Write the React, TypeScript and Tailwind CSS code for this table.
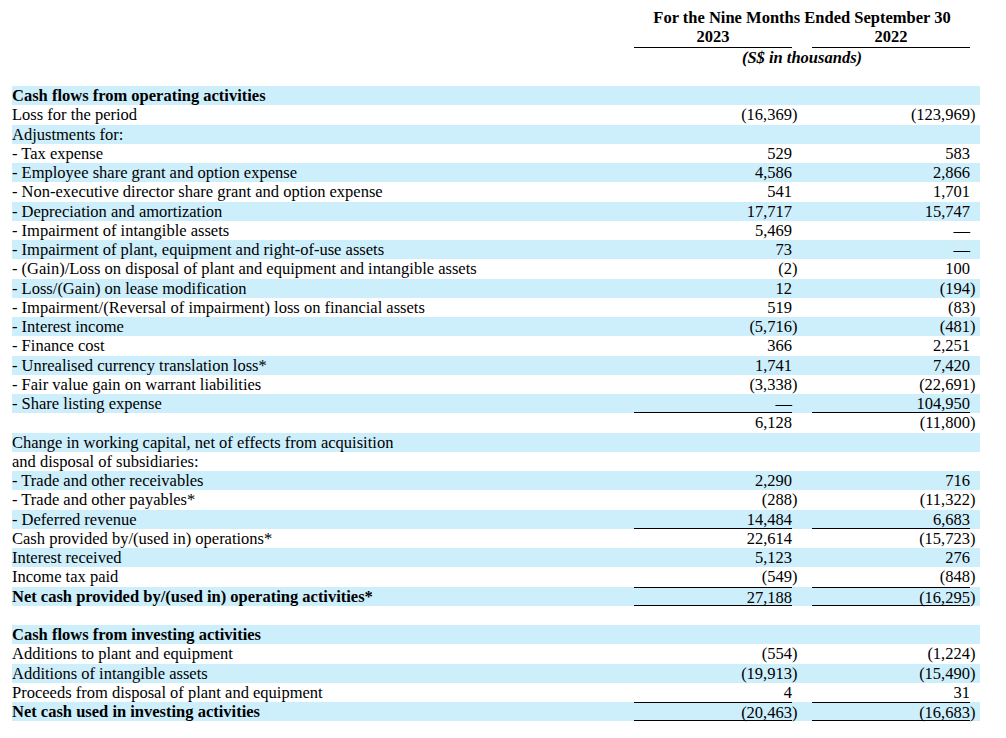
const rows: { label: string; a?: string; b?: string; bold?: boolean; line?: "bottom" | "both" }[] = [
  { label: "Cash flows from operating activities", bold: true },
  { label: "Loss for the period", a: "(16,369)", b: "(123,969)" },
  { label: "Adjustments for:" },
  { label: "- Tax expense", a: "529", b: "583" },
  { label: "- Employee share grant and option expense", a: "4,586", b: "2,866" },
  { label: "- Non-executive director share grant and option expense", a: "541", b: "1,701" },
  { label: "- Depreciation and amortization", a: "17,717", b: "15,747" },
  { label: "- Impairment of intangible assets", a: "5,469", b: "—" },
  { label: "- Impairment of plant, equipment and right-of-use assets", a: "73", b: "—" },
  { label: "- (Gain)/Loss on disposal of plant and equipment and intangible assets", a: "(2)", b: "100" },
  { label: "- Loss/(Gain) on lease modification", a: "12", b: "(194)" },
  { label: "- Impairment/(Reversal of impairment) loss on financial assets", a: "519", b: "(83)" },
  { label: "- Interest income", a: "(5,716)", b: "(481)" },
  { label: "- Finance cost", a: "366", b: "2,251" },
  { label: "- Unrealised currency translation loss*", a: "1,741", b: "7,420" },
  { label: "- Fair value gain on warrant liabilities", a: "(3,338)", b: "(22,691)" },
  { label: "- Share listing expense", a: "—", b: "104,950", line: "bottom" },
  { label: "", a: "6,128", b: "(11,800)" },
  { label: "Change in working capital, net of effects from acquisition" },
  { label: "and disposal of subsidiaries:" },
  { label: "- Trade and other receivables", a: "2,290", b: "716" },
  { label: "- Trade and other payables*", a: "(288)", b: "(11,322)" },
  { label: "- Deferred revenue", a: "14,484", b: "6,683", line: "bottom" },
  { label: "Cash provided by/(used in) operations*", a: "22,614", b: "(15,723)" },
  { label: "Interest received", a: "5,123", b: "276" },
  { label: "Income tax paid", a: "(549)", b: "(848)" },
  { label: "Net cash provided by/(used in) operating activities*", a: "27,188", b: "(16,295)", bold: true, line: "both" },
  { label: "" },
  { label: "Cash flows from investing activities", bold: true },
  { label: "Additions to plant and equipment", a: "(554)", b: "(1,224)" },
  { label: "Additions of intangible assets", a: "(19,913)", b: "(15,490)" },
  { label: "Proceeds from disposal of plant and equipment", a: "4", b: "31" },
  { label: "Net cash used in investing activities", a: "(20,463)", b: "(16,683)", bold: true, line: "both" },
];

const Amount = ({ v }: { v?: string }) => {
  if (!v) return null;
  if (v.endsWith(")")) {
    return (
      <>
        {v.slice(0, -1)}
        <span className="inline-block w-0">)</span>
      </>
    );
  }
  return <>{v}</>;
};

export default function App() {
  return (
    <div className="min-h-[738px] bg-white text-black text-[16.5px] leading-[19.25px] pl-[12px] pt-[8px]" style={{ fontFamily: '"Liberation Serif", "Times New Roman", serif' }}>
      {/* Column headings */}
      <div className="flex w-[968px]">
        <div className="w-[622px]" />
        <div className="w-[336px] text-center font-bold">For the Nine Months Ended September 30</div>
      </div>
      <div className="flex w-[968px] font-bold">
        <div className="w-[622px]" />
        <div className="w-[158px] text-center border-b-[1.5px] border-black">2023</div>
        <div className="w-[20px]" />
        <div className="w-[158px] text-center border-b-[1.5px] border-black">2022</div>
      </div>
      <div className="flex w-[968px]">
        <div className="w-[622px]" />
        <div className="w-[336px] text-center font-bold italic">(S$ in thousands)</div>
      </div>
      <div className="h-[19.25px]" />

      {rows.map((r, i) => {
        const border =
          r.line === "both"
            ? "border-y-[1.5px] border-black"
            : r.line === "bottom"
              ? "border-b-[1.5px] border-black"
              : "";
        return (
          <div key={i} className={`flex w-[968px] h-[19.25px] ${i % 2 === 0 ? "bg-[#cdeefb]" : ""}`}>
            <div className={`w-[622px] whitespace-nowrap ${r.bold ? "font-bold" : ""}`}>{r.label}</div>
            <div className={`w-[158px] text-right ${border}`}>
              <Amount v={r.a} />
            </div>
            <div className="w-[20px]" />
            <div className={`w-[158px] text-right ${border}`}>
              <Amount v={r.b} />
            </div>
          </div>
        );
      })}
    </div>
  );
}
